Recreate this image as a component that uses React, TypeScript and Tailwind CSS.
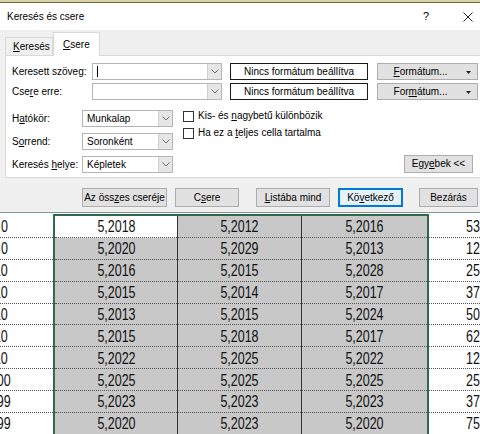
const ui = "font-['Liberation_Sans',Arial,sans-serif] text-[10px] leading-none text-black whitespace-nowrap";

const colA = ["5,2018", "5,2020", "5,2016", "5,2015", "5,2013", "5,2015", "5,2022", "5,2025", "5,2023", "5,2020"];
const colB = ["5,2012", "5,2029", "5,2015", "5,2014", "5,2015", "5,2018", "5,2025", "5,2025", "5,2023", "5,2023"];
const colC = ["5,2016", "5,2013", "5,2028", "5,2017", "5,2024", "5,2017", "5,2022", "5,2025", "5,2023", "5,2020"];
const colD = ["5300", "1280", "2530", "3780", "5030", "6280", "1250", "2500", "3750", "7500"];
const col0 = ["0", "0", "10", "10", "10", "10", "10", "100", "099", "099"];

const Chevron = () => (
  <svg width="8" height="5" viewBox="0 0 8 5">
    <polyline points="0.5,0.5 4,4 7.5,0.5" fill="none" stroke="#707070" strokeWidth="1" />
  </svg>
);

const Combo = ({ width, value, cursor }: { width: string; value?: string; cursor?: boolean }) => (
  <div className={`flex h-[17px] ${width} border border-[#b5b5b5] bg-white`}>
    <div className="flex flex-1 items-center pl-[4px]">
      {cursor && <div className="h-[11px] w-px bg-black" />}
      {value && <span>{value}</span>}
    </div>
    <div className="flex w-[14px] items-center justify-center border-l border-[#cfcfcf] bg-[#e6e6e6]">
      <Chevron />
    </div>
  </div>
);

const FormatBox = () => (
  <div className="flex h-[17px] w-[138px] items-center justify-center border border-[#1a1a1a] bg-white">
    Nincs formátum beállítva
  </div>
);

const FormatButton = ({ children }: { children: React.ReactNode }) => (
  <div className="relative flex h-[17px] w-[101px] items-center justify-center border border-[#adadad] bg-[#e1e1e1] pr-[14px]">
    {children}
    <svg className="absolute right-[6px] top-[7px]" width="5" height="3" viewBox="0 0 5 3">
      <polygon points="0,0 5,0 2.5,3" fill="#222" />
    </svg>
  </div>
);

const Check = ({ children }: { children: React.ReactNode }) => (
  <div className="flex h-[12px] items-center gap-[4px]">
    <div className="h-[11px] w-[11px] border border-[#333] bg-white" />
    <span>{children}</span>
  </div>
);

const Btn = ({ w, ml, children, primary }: { w: string; ml: string; children: React.ReactNode; primary?: boolean }) => (
  <div
    className={`flex h-[19px] ${w} ${ml} items-center justify-center border ${
      primary ? "border-[#0078d7] bg-[#e5f1fb] outline outline-1 -outline-offset-2 outline-[#0078d7]" : "border-[#adadad] bg-[#e1e1e1]"
    }`}
  >
    {children}
  </div>
);

const num = "inline-block scale-x-[0.78] font-['Liberation_Sans',Arial,sans-serif] text-[16px] leading-none text-[#111]";
const cell = "flex h-[21.875px] items-center border-b border-dotted border-[#555] pt-[2px]";

export default function App() {
  return (
    <div className="relative h-[434px] w-[480px] overflow-hidden bg-white">
      <div className="h-[3px] border-b border-[#6d6540] bg-[#d9d2a6]" />

      <div className={`${ui} flex h-[210px] flex-col border-b border-[#7e9c8c] bg-[#f0f0f0]`}>
        <div className="flex h-[27px] items-center bg-white pl-[7px]">
          <span className="flex-1">Keresés és csere</span>
          <span className="mr-[34px] text-[11px]">?</span>
          <svg className="mr-[7px]" width="10" height="10" viewBox="0 0 10 10">
            <path d="M0.5 0.5 L9.5 9.5 M9.5 0.5 L0.5 9.5" stroke="#222" strokeWidth="1" />
          </svg>
        </div>

        <div className="flex h-[25px] items-end pl-[5px]">
          <div className="flex h-[18px] w-[48px] items-center border border-b-0 border-[#d9d9d9] pl-[7px]">
            <span><u>K</u>eresés</span>
          </div>
          <div className="relative z-10 -mb-px flex h-[24px] w-[47px] items-center border border-b-0 border-[#d9d9d9] bg-white pl-[9px]">
            <span><u>C</u>sere</span>
          </div>
        </div>

        <div className="ml-[5px] flex h-[123px] flex-col border border-r-0 border-[#d9d9d9] bg-white pl-[6px] pt-[7px]">
          <div className="flex items-center">
            <span className="w-[80px]">Keresett szöve<u>g</u>:</span>
            <Combo width="w-[130px]" cursor />
            <div className="ml-[8px]"><FormatBox /></div>
            <div className="ml-[9px]"><FormatButton><span><u>F</u>ormátum...</span></FormatButton></div>
          </div>
          <div className="mt-[3px] flex items-center">
            <span className="w-[80px]">Cse<u>r</u>e erre:</span>
            <Combo width="w-[130px]" />
            <div className="ml-[8px]"><FormatBox /></div>
            <div className="ml-[9px]"><FormatButton><span>For<u>m</u>átum...</span></FormatButton></div>
          </div>

          <div className="mt-[10px] flex">
            <div className="flex flex-col gap-[6px]">
              <div className="flex items-center">
                <span className="w-[70px]">H<u>a</u>tókör:</span>
                <Combo width="w-[91px]" value="Munkalap" />
              </div>
              <div className="flex items-center">
                <span className="w-[70px]">S<u>o</u>rrend:</span>
                <Combo width="w-[91px]" value="Soronként" />
              </div>
              <div className="flex items-center">
                <span className="w-[70px]">Keresés <u>h</u>elye:</span>
                <Combo width="w-[91px]" value="Képletek" />
              </div>
            </div>
            <div className="ml-[10px] flex flex-1 flex-col">
              <div className="flex flex-col gap-[5px]">
                <Check>Kis- és <u>n</u>agybetű különbözik</Check>
                <Check>Ha ez a <u>t</u>eljes cella tartalma</Check>
              </div>
              <div className="mt-auto flex justify-end pr-[7px]">
                <div className="flex h-[18px] w-[69px] items-center justify-center border border-[#adadad] bg-[#e1e1e1]">
                  <span>Egy<u>e</u>bek &lt;&lt;</span>
                </div>
              </div>
            </div>
          </div>
        </div>

        <div className="mt-[10px] flex">
          <Btn w="w-[85px]" ml="ml-[82px]"><span>Az öss<u>z</u>es cseréje</span></Btn>
          <Btn w="w-[64px]" ml="ml-[8px]"><span>C<u>s</u>ere</span></Btn>
          <Btn w="w-[74px]" ml="ml-[17px]"><span><u>L</u>istába mind</span></Btn>
          <Btn w="w-[65px]" ml="ml-[8px]" primary><span>Kö<u>v</u>etkező</span></Btn>
          <Btn w="w-[59px]" ml="ml-[16px]"><span>Bezárás</span></Btn>
        </div>
      </div>

      <div className="flex">
        <div className="w-[53px] overflow-hidden pt-[3px]">
          {col0.map((v, i) => (
            <div key={i} className={`${cell} justify-end ${i >= 7 ? "pr-[42px]" : "pr-[45px]"}`}>
              <span className={`${num} origin-right`}>{v}</span>
            </div>
          ))}
        </div>
        <div className="mt-px flex border-2 border-b-0 border-[#2f6b4a]">
          <div className="w-[123px] border-r border-[#333]">
            {colA.map((v, i) => (
              <div key={i} className={`${cell} justify-center ${i === 0 ? "bg-white" : "bg-[#c8c8c8]"}`}>
                <span className={num}>{v}</span>
              </div>
            ))}
          </div>
          <div className="w-[124px] border-r border-[#333]">
            {colB.map((v, i) => (
              <div key={i} className={`${cell} justify-center bg-[#c8c8c8]`}>
                <span className={num}>{v}</span>
              </div>
            ))}
          </div>
          <div className="w-[125px]">
            {colC.map((v, i) => (
              <div key={i} className={`${cell} justify-center bg-[#c8c8c8]`}>
                <span className={num}>{v}</span>
              </div>
            ))}
          </div>
        </div>
        <div className="w-[51px] overflow-hidden pt-[3px]">
          {colD.map((v, i) => (
            <div key={i} className={`${cell} pl-[37px]`}>
              <span className={`${num} origin-left`}>{v}</span>
            </div>
          ))}
        </div>
      </div>
    </div>
  );
}
